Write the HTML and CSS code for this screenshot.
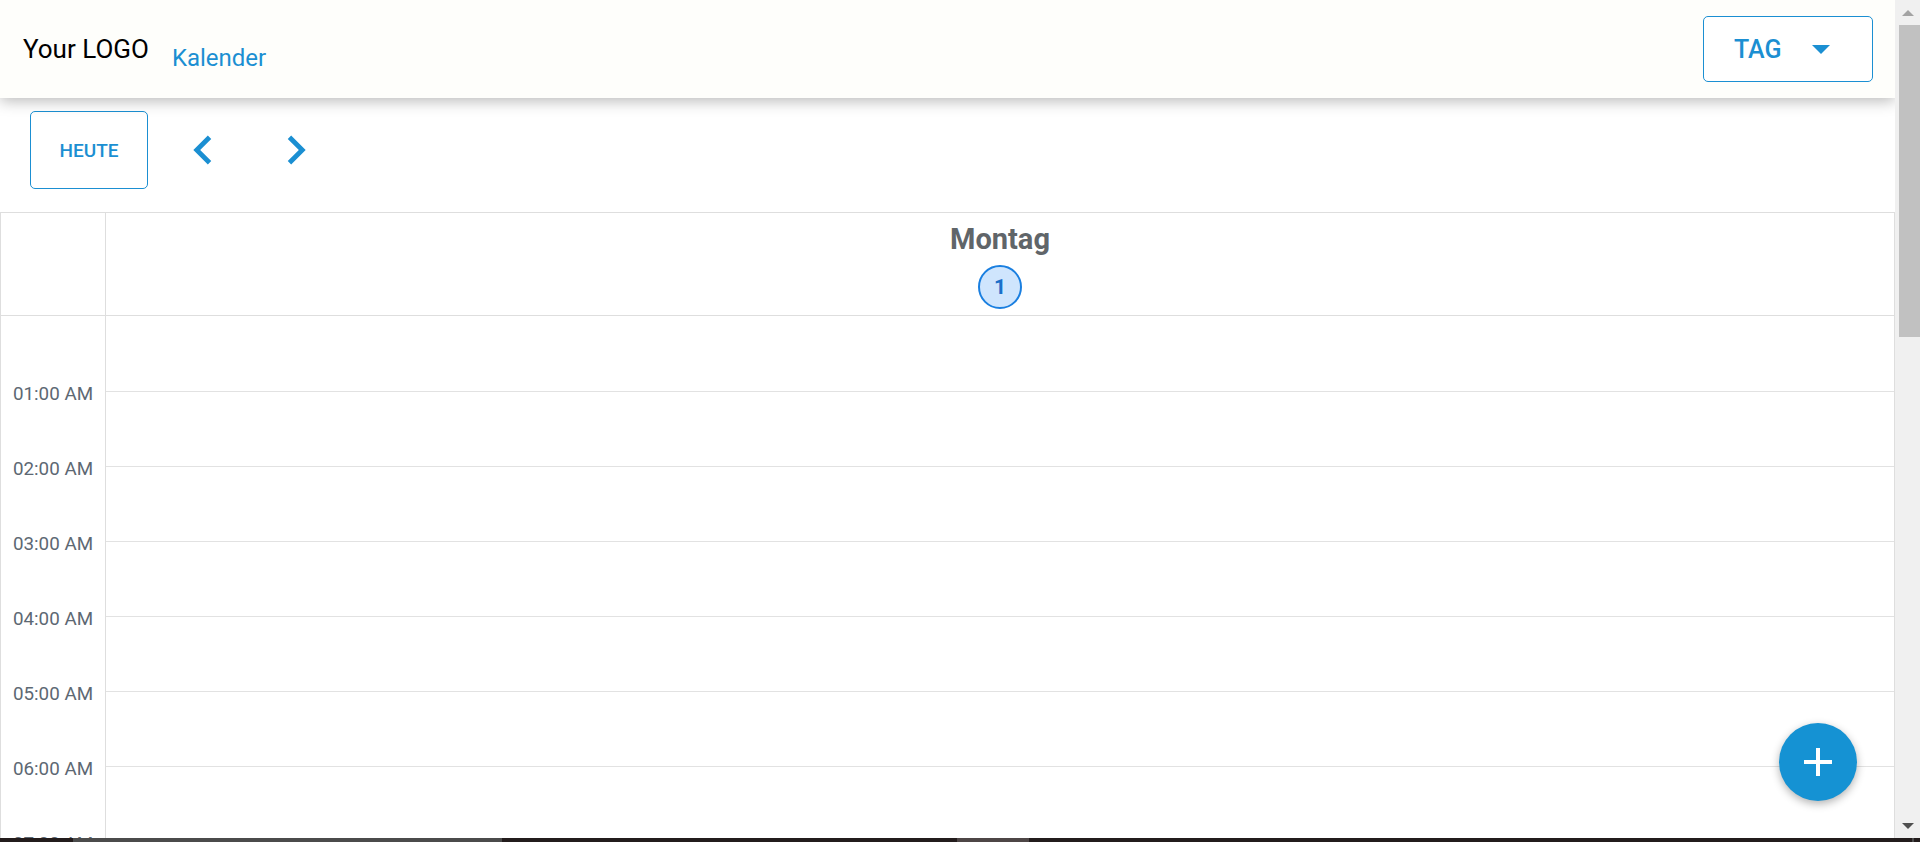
FILE: index.html
```html
<!DOCTYPE html>
<html lang="de">
<head>
<meta charset="utf-8">
<title>Kalender</title>
<link rel="stylesheet" href="styles.css">
</head>
<body>
<div class="screen">
  <div class="app">
    <div class="main">
      <header class="topbar">
        <div class="brand">Your LOGO</div>
        <a class="nav-link">Kalender</a>
        <div class="spacer"></div>
        <button class="view-select"><span>TAG</span><span class="caret"></span></button>
      </header>
      <div class="toolbar">
        <button class="today-btn">HEUTE</button>
        <svg class="chev chev-prev" viewBox="0 0 24 24"><path d="M15.41 7.41L14 6l-6 6 6 6 1.41-1.41L10.830 12z"/></svg>
        <svg class="chev chev-next" viewBox="0 0 24 24"><path d="M10 6L8.59 7.41 13.17 12l-4.58 4.59L10 18l6-6z"/></svg>
      </div>
      <div class="calendar">
        <div class="corner"></div>
        <div class="day-head">
          <div class="day-name">Montag</div>
          <div class="day-num">1</div>
        </div>
        <div class="times">
          <div class="time-spacer"></div>
          <div class="time">01:00 AM</div>
          <div class="time">02:00 AM</div>
          <div class="time">03:00 AM</div>
          <div class="time">04:00 AM</div>
          <div class="time">05:00 AM</div>
          <div class="time">06:00 AM</div>
          <div class="time">07:00 AM</div>
        </div>
        <div class="slots">
          <div class="slot first"></div>
          <div class="slot"></div>
          <div class="slot"></div>
          <div class="slot"></div>
          <div class="slot"></div>
          <div class="slot"></div>
          <div class="slot"></div>
          <div class="slot"></div>
        </div>
      </div>
      <button class="fab"><svg viewBox="0 0 24 24"><path d="M19 13h-6v6h-2v-6H5v-2h6V5h2v6h6v2z"/></svg></button>
    </div>
    <div class="vscroll">
      <div class="arrow-up"></div>
      <div class="thumb"></div>
      <div class="track-fill"></div>
      <div class="arrow-down"></div>
    </div>
  </div>
  <div class="hbar">
    <div class="seg dark w73"></div>
    <div class="seg grey w429"></div>
    <div class="seg dark w455"></div>
    <div class="seg mid w72"></div>
    <div class="seg dark w883"></div>
    <div class="seg grey w2"></div>
    <div class="seg dark fill"></div>
  </div>
</div>
</body>
</html>
```

FILE: styles.css
```css
* { box-sizing: border-box; }
html, body {
  margin: 0;
  padding: 0;
  width: 1920px;
  height: 842px;
  overflow: hidden;
  background: #ffffff;
  font-family: Roboto, "Liberation Sans", Arial, sans-serif;
}
.screen {
  display: flex;
  flex-direction: column;
  width: 1920px;
  height: 842px;
}
.app {
  display: flex;
  height: 838px;
  overflow: hidden;
}
.main {
  width: 1895px;
  position: relative;
  overflow: hidden;
  background: #ffffff;
}
.topbar {
  position: relative;
  z-index: 2;
  height: 98px;
  display: flex;
  align-items: center;
  padding: 0 22px 0 23px;
  background: #fefefb;
  box-shadow: 0 3px 14px rgba(0, 0, 0, 0.28);
}
.brand {
  font-size: 26px;
  color: #000;
  line-height: 1;
}
.nav-link {
  margin-left: 23px;
  padding-top: 17px;
  font-size: 24px;
  color: #1b8fd2;
  line-height: 1;
}
.spacer { flex: 1; }
.view-select {
  width: 170px;
  height: 66px;
  display: flex;
  align-items: center;
  padding: 0 0 0 30px;
  border: 1px solid #1b8fd2;
  border-radius: 5px;
  background: #fff;
  color: #1b8fd2;
  font-family: inherit;
  font-size: 25px;
  font-weight: 500;
}
.caret {
  margin-left: 30px;
  width: 0;
  height: 0;
  border-left: 9px solid transparent;
  border-right: 9px solid transparent;
  border-top: 9px solid #1b8fd2;
}
.toolbar {
  height: 114px;
  display: flex;
  align-items: flex-start;
  padding: 13px 0 0 30px;
}
.today-btn {
  width: 118px;
  height: 78px;
  border: 1px solid #1b8fd2;
  border-radius: 5px;
  background: #fff;
  color: #1b8fd2;
  font-family: inherit;
  font-size: 19px;
  font-weight: 500;
  padding: 0;
}
.chev {
  width: 58px;
  height: 58px;
  fill: #1b8fd2;
  margin-top: 10px;
}
.chev-prev { margin-left: 26px; }
.chev-next { margin-left: 35px; }
.calendar {
  display: grid;
  grid-template-columns: 105px 1fr;
  grid-template-rows: 103px auto;
  border-top: 1px solid #dedede;
  border-left: 1px solid #dedede;
  border-right: 1px solid #dedede;
}
.corner {
  border-right: 1px solid #dedede;
  border-bottom: 1px solid #dedede;
}
.day-head {
  border-bottom: 1px solid #dedede;
  display: flex;
  flex-direction: column;
  align-items: center;
  padding-top: 9px;
}
.day-name {
  flex: none;
  font-size: 29px;
  font-weight: 700;
  color: #606569;
  line-height: 34px;
}
.day-num {
  flex: none;
  margin-top: 9px;
  width: 44px;
  height: 44px;
  border: 2px solid #1a7fe0;
  border-radius: 50%;
  background: #cfe5fd;
  color: #1a6fc9;
  font-size: 21px;
  font-weight: 700;
  display: flex;
  align-items: center;
  justify-content: center;
}
.times {
  border-right: 1px solid #dedede;
  display: flex;
  flex-direction: column;
}
.time-spacer { height: 40px; flex: none; }
.time {
  height: 75px;
  flex: none;
  display: flex;
  align-items: center;
  justify-content: center;
  font-size: 18.8px;
  color: #5d6873;
}
.slots {
  display: flex;
  flex-direction: column;
}
.slot {
  height: 75px;
  border-bottom: 1px solid #e2e2e2;
  flex: none;
}
.slot.first { height: 76px; }
.fab {
  position: absolute;
  right: 38px;
  bottom: 37px;
  width: 78px;
  height: 78px;
  border: none;
  border-radius: 50%;
  background: #1592d3;
  box-shadow: 0 3px 8px rgba(0, 0, 0, 0.3);
  display: flex;
  align-items: center;
  justify-content: center;
  padding: 0;
}
.fab svg {
  width: 48px;
  height: 48px;
  fill: #ffffff;
}
.vscroll {
  width: 25px;
  background: #f0f0f0;
  display: flex;
  flex-direction: column;
  align-items: center;
}
.arrow-up {
  margin-top: 10px;
  width: 0;
  height: 0;
  border-left: 6px solid transparent;
  border-right: 6px solid transparent;
  border-bottom: 6px solid #a3a3a3;
}
.thumb {
  margin-top: 9px;
  margin-left: 3px;
  width: 21px;
  height: 312px;
  background: #c1c1c1;
}
.track-fill { flex: 1; }
.arrow-down {
  margin-bottom: 9px;
  margin-left: 1px;
  width: 0;
  height: 0;
  border-left: 6px solid transparent;
  border-right: 6px solid transparent;
  border-top: 6px solid #505050;
}
.hbar {
  height: 4px;
  display: flex;
}
.seg { height: 4px; flex: none; }
.dark { background: #231c1c; }
.grey { background: #4b4b4b; }
.mid { background: #4e4646; }
.w73 { width: 73px; }
.w429 { width: 429px; }
.w455 { width: 455px; }
.w72 { width: 72px; }
.w883 { width: 883px; }
.w2 { width: 2px; }
.fill { flex: 1; }
```
